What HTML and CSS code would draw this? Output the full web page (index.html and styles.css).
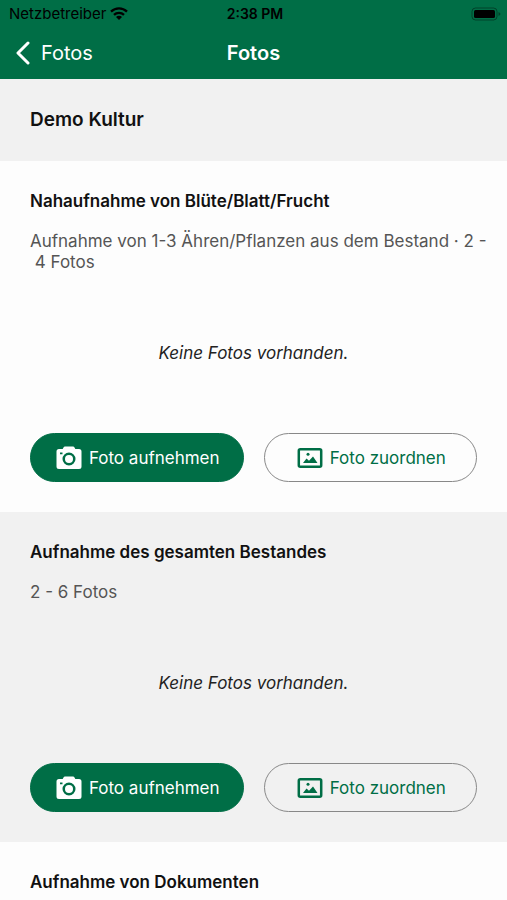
FILE: index.html
```html
<!DOCTYPE html>
<html lang="de">
<head>
    <meta charset="UTF-8">
    <meta name="viewport" content="width=device-width, initial-scale=1.0">
    <title>Fotos</title>
    <link rel="stylesheet" href="styles.css">
</head>
<body>
    <!-- Icons, used in every section -->
    <svg class="sprite" aria-hidden="true">
        <symbol id="icon-camera" viewBox="0 0 26 24">
            <path fill="currentColor" fill-rule="evenodd" d="M9 .5h8q1 0 1.500 1l.8 1.500H23q2.500 0 2.500 2.500v15q0 2.500-2.500 2.500H3Q.5 23 .5 20.500V5.500Q.5 3 3 3h3.700L7.500 1.500Q8 .5 9 .5zM13 6.500a6.500 6.500 0 1 0 0 13a6.500 6.500 0 0 0 0-13zM4 6.500v1.700h2.500V6.500z"/>
            <circle cx="13" cy="13" r="4" fill="currentColor"/>
        </symbol>
        <symbol id="icon-picture" viewBox="0 0 26 22">
            <rect x="1.800" y="2.200" width="22.400" height="17.600" rx="1.500" fill="none" stroke="currentColor" stroke-width="2.500"/>
            <circle cx="11" cy="7.300" r="1.500" fill="currentColor"/>
            <path fill="currentColor" d="M6 16l3.500-4.500 2.500 2.300L16 9.500l4.500 6.500z"/>
        </symbol>
    </svg>

    <div class="screen">
        <header class="header">
            <div class="status-bar">
                <span class="carrier">
                    Netzbetreiber
                    <svg class="wifi" viewBox="0 0 18 13" aria-hidden="true">
                        <g fill="none" stroke="currentColor" stroke-width="2.300">
                            <path d="M1 4.600a11.500 11.500 0 0 1 16 0"/>
                            <path d="M4 7.900a7.200 7.200 0 0 1 10 0"/>
                        </g>
                        <path fill="currentColor" d="M9 13L6 10a4.200 4.200 0 0 1 6 0z"/>
                    </svg>
                </span>
                <span class="time">2:38 PM</span>
                <svg class="battery" viewBox="0 0 30 14" aria-hidden="true">
                    <rect x="1" y="1" width="25" height="12" rx="3.500" fill="none" stroke="currentColor" opacity=".4"/>
                    <rect x="3" y="3" width="21" height="8" rx="1.500" fill="currentColor"/>
                    <path d="M27.500 5v4q2-.8 2-2t-2-2z" fill="currentColor" opacity=".4"/>
                </svg>
            </div>
            <nav class="nav-bar">
                <a class="back" href="#">
                    <svg class="chevron" viewBox="0 0 14 24" aria-hidden="true">
                        <path d="M12 2L2 12l10 10" fill="none" stroke="currentColor" stroke-width="3" stroke-linecap="round" stroke-linejoin="round"/>
                    </svg>
                    Fotos
                </a>
                <h1 class="nav-title">Fotos</h1>
            </nav>
        </header>

        <main class="content">
            <h2 class="culture">Demo Kultur</h2>

            <section class="photo-group">
                <h3 class="group-title">Nahaufnahme von Blüte/Blatt/Frucht</h3>
                <p class="group-text">Aufnahme von 1-3 Ähren/Pflanzen aus dem Bestand · 2 - &nbsp;4 Fotos</p>
                <p class="empty">Keine Fotos vorhanden.</p>
                <div class="actions">
                    <button class="button button-primary" type="button">
                        <svg class="icon-camera" aria-hidden="true"><use href="#icon-camera"/></svg>
                        Foto aufnehmen
                    </button>
                    <button class="button" type="button">
                        <svg class="icon-picture" aria-hidden="true"><use href="#icon-picture"/></svg>
                        Foto zuordnen
                    </button>
                </div>
            </section>

            <section class="photo-group photo-group-grey">
                <h3 class="group-title">Aufnahme des gesamten Bestandes</h3>
                <p class="group-text">2 - 6 Fotos</p>
                <p class="empty">Keine Fotos vorhanden.</p>
                <div class="actions">
                    <button class="button button-primary" type="button">
                        <svg class="icon-camera" aria-hidden="true"><use href="#icon-camera"/></svg>
                        Foto aufnehmen
                    </button>
                    <button class="button" type="button">
                        <svg class="icon-picture" aria-hidden="true"><use href="#icon-picture"/></svg>
                        Foto zuordnen
                    </button>
                </div>
            </section>

            <section class="photo-group">
                <h3 class="group-title">Aufnahme von Dokumenten</h3>
            </section>
        </main>
    </div>
</body>
</html>
```

FILE: styles.css
```css
* {
    box-sizing: border-box;
}

body {
    margin: 0;
    font-family: Inter, "Liberation Sans", sans-serif;
    font-size: 17px;
    line-height: 20px;
    color: #111;
    background-color: #fdfdfd;
}

h1,
h2,
h3,
p {
    margin: 0;
}

.sprite {
    display: none;
}

.screen {
    display: flex;
    flex-direction: column;
    height: 100vh;
}

/* Header */
.header {
    background-color: #006e46;
}

.status-bar {
    display: grid;
    grid-template-columns: 1fr auto 1fr;
    align-items: center;
    height: 27px;
    padding: 0 6px 0 9px;
    font-size: 14px;
    color: #000;
}

.carrier {
    display: flex;
    align-items: center;
    gap: 4px;
    font-size: 15px;
}

.wifi {
    width: 18px;
    height: 13px;
}

.time {
    font-weight: 600;
}

.battery {
    justify-self: end;
    width: 30px;
    height: 14px;
}

.nav-bar {
    display: grid;
    grid-template-columns: 1fr auto 1fr;
    align-items: center;
    height: 52px;
    padding: 0 16px;
    font-size: 20px;
    color: #fff;
}

.back {
    display: flex;
    align-items: center;
    gap: 11px;
    color: inherit;
    text-decoration: none;
}

.chevron {
    width: 14px;
    height: 24px;
}

.nav-title {
    font-size: 20px;
    font-weight: 600;
}

/* Content */
.content {
    flex: 1;
    min-height: 0;
    overflow: hidden;
}

.culture {
    padding: 31px 30px;
    font-size: 19px;
    font-weight: 600;
    background-color: #f1f1f1;
}

.photo-group {
    padding: 30px;
}

.photo-group-grey {
    background-color: #f1f1f1;
}

.group-title {
    margin-bottom: 20px;
    font-size: 17px;
    font-weight: 600;
}

.group-text {
    margin-right: -12px;
    line-height: 21px;
    color: #555;
}

.empty {
    padding: 70px 0;
    text-align: center;
    font-style: italic;
    color: #222;
}

.actions {
    display: grid;
    grid-template-columns: 1fr 1fr;
    gap: 20px;
}

.button {
    display: flex;
    align-items: center;
    justify-content: center;
    gap: 7px;
    height: 49px;
    padding: 0 0 0 2px;
    border: 1px solid #888;
    border-radius: 25px;
    font: inherit;
    color: #006e46;
    background-color: transparent;
}

.button-primary {
    border-color: #006e46;
    color: #fff;
    background-color: #006e46;
}

.icon-camera {
    width: 26px;
    height: 24px;
}

.icon-picture {
    width: 26px;
    height: 22px;
}
```
